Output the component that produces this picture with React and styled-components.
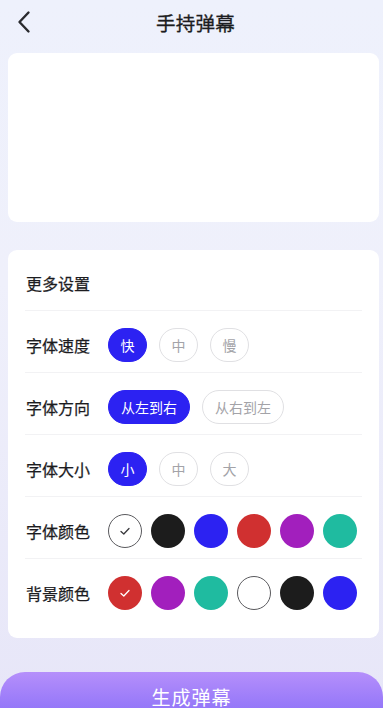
import React, { useState } from "react";
import styled, { createGlobalStyle } from "styled-components";

const Global = createGlobalStyle`
  html, body { margin: 0; padding: 0; }
  body {
    font-family: "Noto Sans CJK SC", "Noto Sans", sans-serif;
    background: #eef0fb;
  }
  * { box-sizing: border-box; }
`;

const Page = styled.div`
  width: 383px;
  height: 708px;
  overflow: hidden;
  background: linear-gradient(180deg, #eef1fc 0%, #eff0fb 40%, #e7e6f8 100%);
  display: flex;
  flex-direction: column;
  position: relative;
`;

const Header = styled.div`
  height: 44px;
  display: flex;
  align-items: center;
  justify-content: center;
  position: relative;
  color: #2a2a2e;
`;

const Back = styled.button`
  position: absolute;
  left: 12px;
  top: 9px;
  width: 24px;
  height: 26px;
  border: none;
  background: none;
  padding: 0;
  display: flex;
  align-items: center;
  justify-content: center;
`;

const Title = styled.h1`
  margin: 0;
  font-size: 19.5px;
  font-weight: 400;
  letter-spacing: 0.3px;
  color: #1c1c20;
  margin-left: 8px;
  -webkit-text-stroke: 0.3px #1c1c20;
`;

const Card = styled.div`
  margin: 0 4px 0 8px;
  background: #fff;
  border-radius: 9px;
`;

const Preview = styled(Card)`
  margin-top: 9px;
  height: 169px;
`;

const Settings = styled(Card)`
  margin-top: 28px;
  height: 388px;
  padding: 0 17px 0 17px;
  display: flex;
  flex-direction: column;
`;

const SectionTitle = styled.div`
  height: 61px;
  display: flex;
  align-items: center;
  padding-left: 1px;
  padding-top: 6px;
  font-size: 16px;
  font-weight: 400;
  color: #1c1c1f;
  -webkit-text-stroke: 0.25px #1c1c1f;
  border-bottom: 1px solid #f2f2f4;
`;

const Row = styled.div`
  height: 62px;
  display: flex;
  align-items: center;
  padding-top: 6px;
  border-bottom: ${(p) => (p.last ? "none" : "1px solid #f2f2f4")};
`;

const Label = styled.div`
  width: 83px;
  padding-left: 1px;
  font-size: 16px;
  font-weight: 400;
  color: #1c1c1f;
  -webkit-text-stroke: 0.25px #1c1c1f;
  flex-shrink: 0;
`;

const Options = styled.div`
  display: flex;
  align-items: center;
  gap: ${(p) => p.gap || 12}px;
`;

const Pill = styled.button`
  height: 34px;
  min-width: 39px;
  padding: 0 ${(p) => (p.wide ? 12 : 0)}px;
  border-radius: 17px;
  font-family: inherit;
  font-size: 14px;
  display: flex;
  align-items: center;
  justify-content: center;
  border: 1px solid ${(p) => (p.active ? "#2c22f2" : "#e0e0e3")};
  background: ${(p) => (p.active ? "#2c22f2" : "#fff")};
  color: ${(p) => (p.active ? "#fff" : "#a3a3a8")};
  cursor: pointer;
`;

const Swatch = styled.button`
  width: 34px;
  height: 34px;
  border-radius: 50%;
  padding: 0;
  border: ${(p) => (p.color === "#ffffff" ? "1.3px solid #5a5a5e" : "none")};
  background: ${(p) => p.color};
  display: flex;
  align-items: center;
  justify-content: center;
  cursor: pointer;
`;

const Spacer = styled.div`
  flex: 1;
`;

const Generate = styled.button`
  margin: 0 0 -14px 0;
  height: 50px;
  width: 383px;
  border: none;
  border-radius: 25px 25px 0 0;
  background: linear-gradient(180deg, #b58ffb 0%, #9a7bf9 60%, #8a70f7 100%);
  color: #fff;
  font-family: inherit;
  font-size: 19px;
  letter-spacing: 1px;
  display: flex;
  justify-content: center;
  padding-top: 11px;
  flex-shrink: 0;
`;

const Check = ({ color }) => (
  <svg width="14" height="14" viewBox="0 0 14 14" fill="none">
    <path d="M3 7.4 L5.8 10 L11 4.5" stroke={color} strokeWidth="1.3" strokeLinecap="round" strokeLinejoin="round" />
  </svg>
);

const fontColors = ["#ffffff", "#1c1c1c", "#2c22f2", "#d03030", "#a21fbd", "#1fbba0"];
const bgColors = ["#d03030", "#a21fbd", "#1fbba0", "#ffffff", "#1c1c1c", "#2c22f2"];

export default function App() {
  const [speed, setSpeed] = useState(0);
  const [dir, setDir] = useState(0);
  const [size, setSize] = useState(0);
  const [fc, setFc] = useState(0);
  const [bc, setBc] = useState(0);

  return (
    <Page>
      <Global />
      <Header>
        <Back aria-label="back">
          <svg width="16" height="24" viewBox="0 0 16 24" fill="none">
            <path d="M12.5 2.5 L3.5 12 L12.5 21.5" stroke="#2a2a2e" strokeWidth="2.4" strokeLinecap="round" strokeLinejoin="round" />
          </svg>
        </Back>
        <Title>手持弹幕</Title>
      </Header>
      <Preview />
      <Settings>
        <SectionTitle>更多设置</SectionTitle>
        <Row>
          <Label>字体速度</Label>
          <Options>
            {["快", "中", "慢"].map((t, i) => (
              <Pill key={t} active={speed === i} onClick={() => setSpeed(i)}>{t}</Pill>
            ))}
          </Options>
        </Row>
        <Row>
          <Label>字体方向</Label>
          <Options>
            {["从左到右", "从右到左"].map((t, i) => (
              <Pill key={t} wide active={dir === i} onClick={() => setDir(i)}>{t}</Pill>
            ))}
          </Options>
        </Row>
        <Row>
          <Label>字体大小</Label>
          <Options>
            {["小", "中", "大"].map((t, i) => (
              <Pill key={t} active={size === i} onClick={() => setSize(i)}>{t}</Pill>
            ))}
          </Options>
        </Row>
        <Row>
          <Label>字体颜色</Label>
          <Options gap={9}>
            {fontColors.map((c, i) => (
              <Swatch key={c} color={c} onClick={() => setFc(i)}>
                {fc === i && <Check color={c === "#ffffff" ? "#3a3a3e" : "#fff"} />}
              </Swatch>
            ))}
          </Options>
        </Row>
        <Row last>
          <Label>背景颜色</Label>
          <Options gap={9}>
            {bgColors.map((c, i) => (
              <Swatch key={c} color={c} onClick={() => setBc(i)}>
                {bc === i && <Check color={c === "#ffffff" ? "#3a3a3e" : "#fff"} />}
              </Swatch>
            ))}
          </Options>
        </Row>
      </Settings>
      <Spacer />
      <Generate>生成弹幕</Generate>
    </Page>
  );
}
